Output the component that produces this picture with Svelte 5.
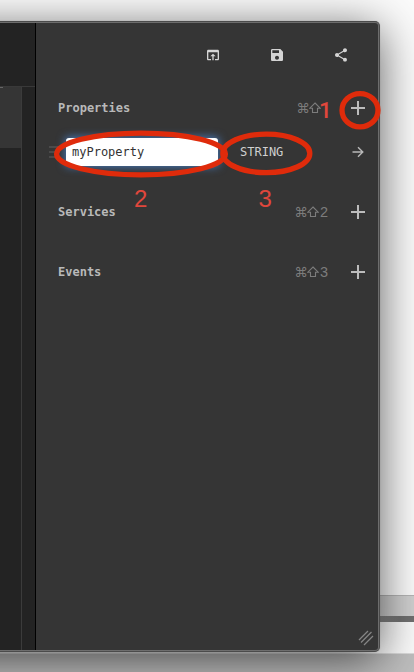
<script>
  const sections = [
    { name: 'Properties', key: '', field: { name: 'myProperty', type: 'STRING' } },
    { name: 'Services', key: '2' },
    { name: 'Events', key: '3' }
  ];
</script>

<div class="desktop">
  <div class="behind"><i class="bar"></i><i class="line"></i><i class="gap"></i><i class="floor"></i></div>
  <div class="window">
    <div class="editor">
      <div class="tabs"></div>
      <div class="code"><div class="minimap"><div class="view"></div></div><div class="gutter"></div></div>
    </div>
    <div class="panel">
      <div class="tools">
        <svg viewBox="0 0 24 24"><path d="M19 4H5c-1.11 0-2 .9-2 2v12c0 1.1.89 2 2 2h4v-2H5V8h14v10h-4v2h4c1.1 0 2-.9 2-2V6c0-1.1-.89-2-2-2zm-7 6l-4 4h3v6h2v-6h3l-4-4z" /></svg>
        <svg viewBox="0 0 24 24"><path d="M17 3H5c-1.11 0-2 .9-2 2v14c0 1.1.89 2 2 2h14c1.1 0 2-.9 2-2V7l-4-4zm-5 16c-1.66 0-3-1.34-3-3s1.34-3 3-3 3 1.34 3 3-1.34 3-3 3zm3-10H5V5h10v4z" /></svg>
        <svg viewBox="0 0 24 24"><path d="M18 16.08c-.76 0-1.44.3-1.96.77L8.91 12.7c.05-.23.09-.46.09-.7s-.04-.47-.09-.7l7.05-4.11c.54.5 1.25.81 2.04.81 1.66 0 3-1.34 3-3s-1.34-3-3-3-3 1.34-3 3c0 .24.04.47.09.7L8.04 9.81C7.5 9.31 6.79 9 6 9c-1.66 0-3 1.34-3 3s1.34 3 3 3c.79 0 1.5-.31 2.04-.81l7.12 4.16c-.05.21-.08.43-.08.65 0 1.61 1.31 2.92 2.92 2.92s2.92-1.31 2.92-2.92-1.31-2.92-2.92-2.92z" /></svg>
      </div>
      {#each sections as s}
        <section>
          <div class="head">
            <b>{s.name}</b>
            <span class="keys" class:first={!s.key}>
              <span class="cmd">⌘</span>
              <svg class="shift" viewBox="0 0 12 12"><path d="M6 1L11.2 6.2H8.5V10.5H3.5V6.2H.8Z" /></svg>
              <span class="digit">{s.key}</span>
            </span>
            <svg class="plus" viewBox="0 0 14 14"><path d="M0 7H14M7 0V14" /></svg>
          </div>
          {#if s.field}
            <div class="row">
              <div class="grip"><i></i><i></i><i></i></div>
              <div class="input">{s.field.name}</div>
              <span class="type">{s.field.type}</span>
              <svg class="arrow" viewBox="0 0 12 12"><path d="M.5 6H10.5M6 1.2L10.8 6L6 10.8" /></svg>
            </div>
          {/if}
        </section>
      {/each}
      <svg class="resize" viewBox="0 0 16 16"><path d="M1 10L10 1M3 12.5L13.5 2M6 15L15 6" /></svg>
    </div>
  </div>
  <svg class="marks" viewBox="0 0 414 672">
    <ellipse cx="360" cy="110.3" rx="18" ry="16.6" />
    <ellipse cx="141" cy="154" rx="84.4" ry="20.8" />
    <ellipse cx="266.3" cy="153.4" rx="43.5" ry="19.3" />
    <text class="one" x="319" y="118">1</text>
    <text x="134" y="207">2</text>
    <text x="258.5" y="207">3</text>
  </svg>
</div>

<style>
  :global(body) { margin: 0; background: #fff; }
  .desktop { position: relative; isolation: isolate; width: 414px; height: 672px; overflow: hidden; box-sizing: border-box; padding-top: 21px; background: #fbfbfb; font: 12px/16px "DejaVu Sans Mono", monospace; }
  .behind { position: absolute; z-index: -2; inset: 595px 0 0 0; display: flex; flex-direction: column; }
  .bar { height: 20px; background: #d0d0d0; border-top: 1px solid #b5b5b5; }
  .line { height: 6px; background: linear-gradient(90deg, #8a8a8a 380px, #707070 400px); }
  .gap { height: 31px; background: #fafafa; }
  .floor { flex: 1; background: #bebebe; border-top: 1px solid #dadada; }
  .window { position: relative; display: flex; width: 380px; height: 631px; box-sizing: border-box; border: solid #4b4b4b; border-width: 1px 1px 1px 0; border-radius: 0 5px 5px 0; background: #353535; }
  .window::before { content: ""; position: absolute; z-index: -1; inset: -1px -1px -1px -80px; border-radius: 5px; box-shadow: 0 8px 46px rgba(0,0,0,.64), 0 0 1px rgba(0,0,0,.3); }
  .window::after { content: ""; position: absolute; inset: 0; border: solid #6d6d6d; border-width: 1px 1px 1px 0; border-radius: 0 4px 4px 0; }
  .editor { width: 35px; border-right: 1px solid #000; background: #232323; display: flex; flex-direction: column; }
  .tabs { height: 64px; border-bottom: 1px solid #393939; }
  .code { flex: 1; display: flex; }
  .minimap { width: 21px; border-right: 1px solid #3b3b3b; }
  .view { height: 61px; background: #353535; }
  .view::before { content: ""; display: block; width: 3px; height: 1px; background: #666; }
  .panel { position: relative; flex: 1; color: #c0c0c0; }
  .tools { display: flex; justify-content: flex-end; gap: 48px; padding: 25px 30px 0 0; height: 45px; }
  .tools svg { width: 16px; height: 16px; fill: #d4d4d4; }
  section { padding: 0 14px 0 22px; height: 60px; }
  section:nth-of-type(1) { height: 104px; }
  .head { display: flex; align-items: center; height: 32px; }
  .head b { flex: 1; color: #b9b9b9; }
  .keys { display: flex; align-items: center; color: #7c7c7c; margin-right: 23px; }
  .cmd { width: 12px; font: 13.5px/16px "DejaVu Sans", sans-serif; display: flex; justify-content: center; }
  .shift { width: 12px; height: 12px; margin-right: 1px; fill: none; stroke: #7c7c7c; stroke-width: 1.1; }
  .digit { width: 8px; height: 16px; font: 14.5px/16px "Liberation Sans", sans-serif; }
  .first .digit { width: 6px; }
  .plus { width: 14px; height: 14px; fill: none; stroke: #bcbcbc; stroke-width: 2; }
  .row { display: flex; align-items: center; height: 28px; margin: 14px 0 0 -9px; }
  .grip { width: 11px; margin-right: 6px; display: grid; gap: 3px; }
  .grip i { height: 2px; background: #4b4b4b; }
  .input { width: 152px; height: 28px; box-sizing: border-box; padding-left: 6px; border-radius: 3px; background: #fff; color: #333; line-height: 28px; box-shadow: 0 0 8px 1px #4779b9; }
  .type { flex: 1; margin-left: 22px; color: #d0d0d0; }
  .arrow { width: 12px; height: 12px; margin-right: 1px; fill: none; stroke: #b8b8b8; stroke-width: 1.4; }
  .resize { position: absolute; right: 5px; bottom: 5px; width: 16px; height: 16px; fill: none; stroke: #858585; stroke-width: 1.3; }
  .marks { position: absolute; inset: 0; width: 414px; height: 672px; fill: none; }
  .marks ellipse { stroke: #df2b0b; stroke-width: 5.3; }
  .marks text { fill: #e0473c; font: 24px "Liberation Sans", sans-serif; }
  .marks .one { font: 500 22.5px Roboto, sans-serif; }
</style>
